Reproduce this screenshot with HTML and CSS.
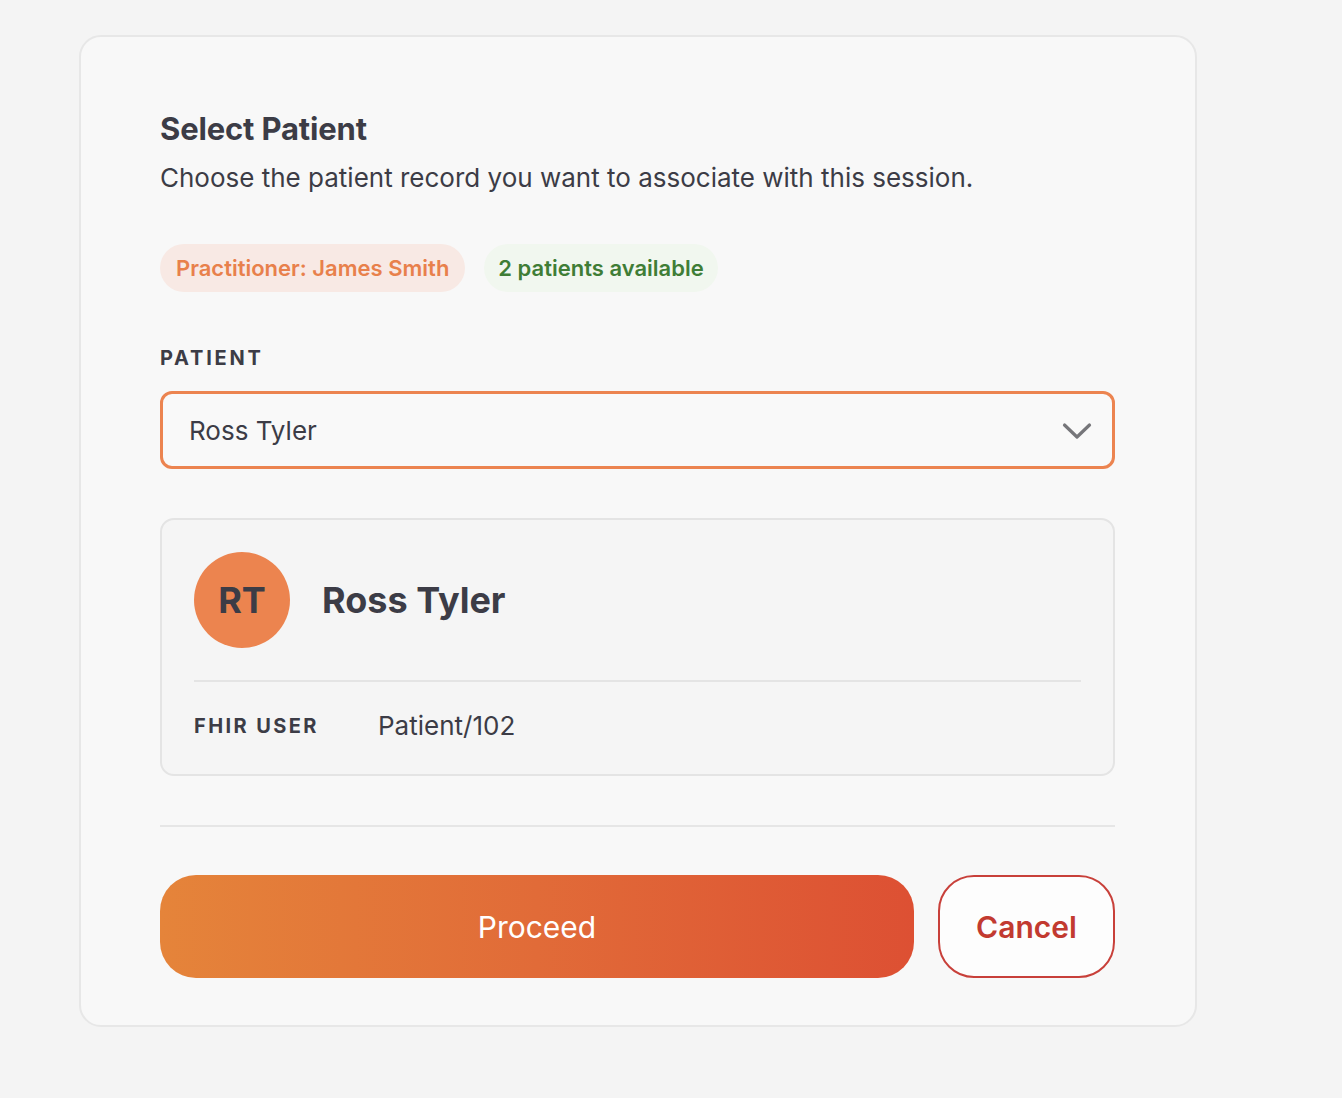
FILE: index.html
```html
<!DOCTYPE html>
<html lang="en">
<head>
<meta charset="utf-8">
<title>Select Patient</title>
<link rel="stylesheet" href="styles.css">
</head>
<body>
<main class="card">
  <h1 class="title">Select Patient</h1>
  <p class="subtitle">Choose the patient record you want to associate with this session.</p>
  <div class="pills">
    <span class="pill pill-orange">Practitioner: James Smith</span>
    <span class="pill pill-green">2 patients available</span>
  </div>
  <label class="label">PATIENT</label>
  <div class="select">
    <span class="select-value">Ross Tyler</span>
    <svg class="chevron" width="30" height="18" viewBox="0 0 30 18" fill="none"><path d="M2.5 3 L15 15 L27.5 3" stroke="#76767a" stroke-width="3.2" stroke-linecap="round" stroke-linejoin="round"/></svg>
  </div>
  <section class="patient">
    <div class="patient-head">
      <div class="avatar">RT</div>
      <div class="patient-name">Ross Tyler</div>
    </div>
    <div class="patient-row">
      <span class="row-label">FHIR USER</span>
      <span class="row-value">Patient/102</span>
    </div>
  </section>
  <hr class="divider">
  <div class="actions">
    <button class="btn btn-primary">Proceed</button>
    <button class="btn btn-cancel">Cancel</button>
  </div>
</main>
</body>
</html>
```
FILE: styles.css
```css
* { box-sizing: border-box; }
html, body { margin: 0; padding: 0; }
body {
  background: #f4f4f4;
  font-family: Inter, "Noto Sans", sans-serif;
  color: #3c3c46;
  padding: 35px 0 0 79px;
}
.card {
  width: 1118px;
  background: #f8f8f8;
  border: 2px solid #e7e7e7;
  border-radius: 22px;
  padding: 74px 80px 47px 79px;
  display: flex;
  flex-direction: column;
}
.card > * { flex-shrink: 0; }
.title {
  margin: 0;
  font-size: 31px;
  line-height: 36px;
  font-weight: 700;
  letter-spacing: -0.005em;
  color: #3c3c46;
}
.subtitle {
  margin: 15px 0 0;
  font-size: 26px;
  line-height: 32px;
  color: #3c3c46;
}
.pills {
  display: flex;
  gap: 19px;
  margin-top: 50px;
}
.pill {
  height: 48px;
  border-radius: 24px;
  padding: 0 16px;
  display: flex;
  align-items: center;
  font-size: 22px;
  font-weight: 600;
}
.pill-orange { background: #f8e9e4; color: #e8804b; }
.pill-green { background: #f1f7ef; color: #3f7d36; padding: 0 14px; }
.label {
  margin-top: 54px;
  font-size: 20px;
  line-height: 24px;
  font-weight: 700;
  letter-spacing: 0.14em;
  color: #3c3c46;
}
.select {
  margin-top: 21px;
  height: 78px;
  border: 3px solid #ec8450;
  border-radius: 12px;
  background: #f9f9f9;
  display: flex;
  align-items: center;
  justify-content: space-between;
  padding: 0 20px 0 26px;
}
.select-value { font-size: 26px; color: #3c3c46; }
.chevron { display: block; margin-top: 2px; }
.patient {
  margin-top: 49px;
  border: 2px solid #e4e4e4;
  border-radius: 14px;
  background: #f5f5f5;
  padding: 32px 32px 31px;
}
.patient-head {
  display: flex;
  align-items: center;
  gap: 32px;
  padding-bottom: 32px;
  border-bottom: 2px solid #e4e4e4;
}
.avatar {
  width: 96px;
  height: 96px;
  border-radius: 50%;
  background: #ec844f;
  display: flex;
  align-items: center;
  justify-content: center;
  font-size: 36px;
  font-weight: 700;
  color: #3c3c46;
}
.patient-name {
  font-size: 36px;
  font-weight: 700;
  color: #3c3c46;
}
.patient-row {
  display: flex;
  align-items: center;
  padding-top: 27px;
}
.row-label {
  width: 184px;
  font-size: 20px;
  font-weight: 700;
  letter-spacing: 0.12em;
  color: #3c3c46;
}
.row-value { font-size: 26px; line-height: 34px; color: #3c3c46; }
.divider {
  margin: 49px 0 0;
  border: 0;
  height: 2px;
  background: #e6e6e6;
}
.actions {
  margin-top: 48px;
  display: flex;
  gap: 24px;
}
.btn {
  height: 103px;
  border-radius: 36px;
  font-family: Inter, "Noto Sans", sans-serif;
  font-size: 30px;
}
.btn-primary {
  flex: 1;
  border: 0;
  color: #ffffff;
  background: linear-gradient(90deg, #e5843a 0%, #e16b38 50%, #dd5033 100%);
}
.btn-cancel {
  width: 177px;
  border: 2px solid #c8403a;
  background: #fdfdfd;
  color: #c23a30;
  font-weight: 600;
}
```
